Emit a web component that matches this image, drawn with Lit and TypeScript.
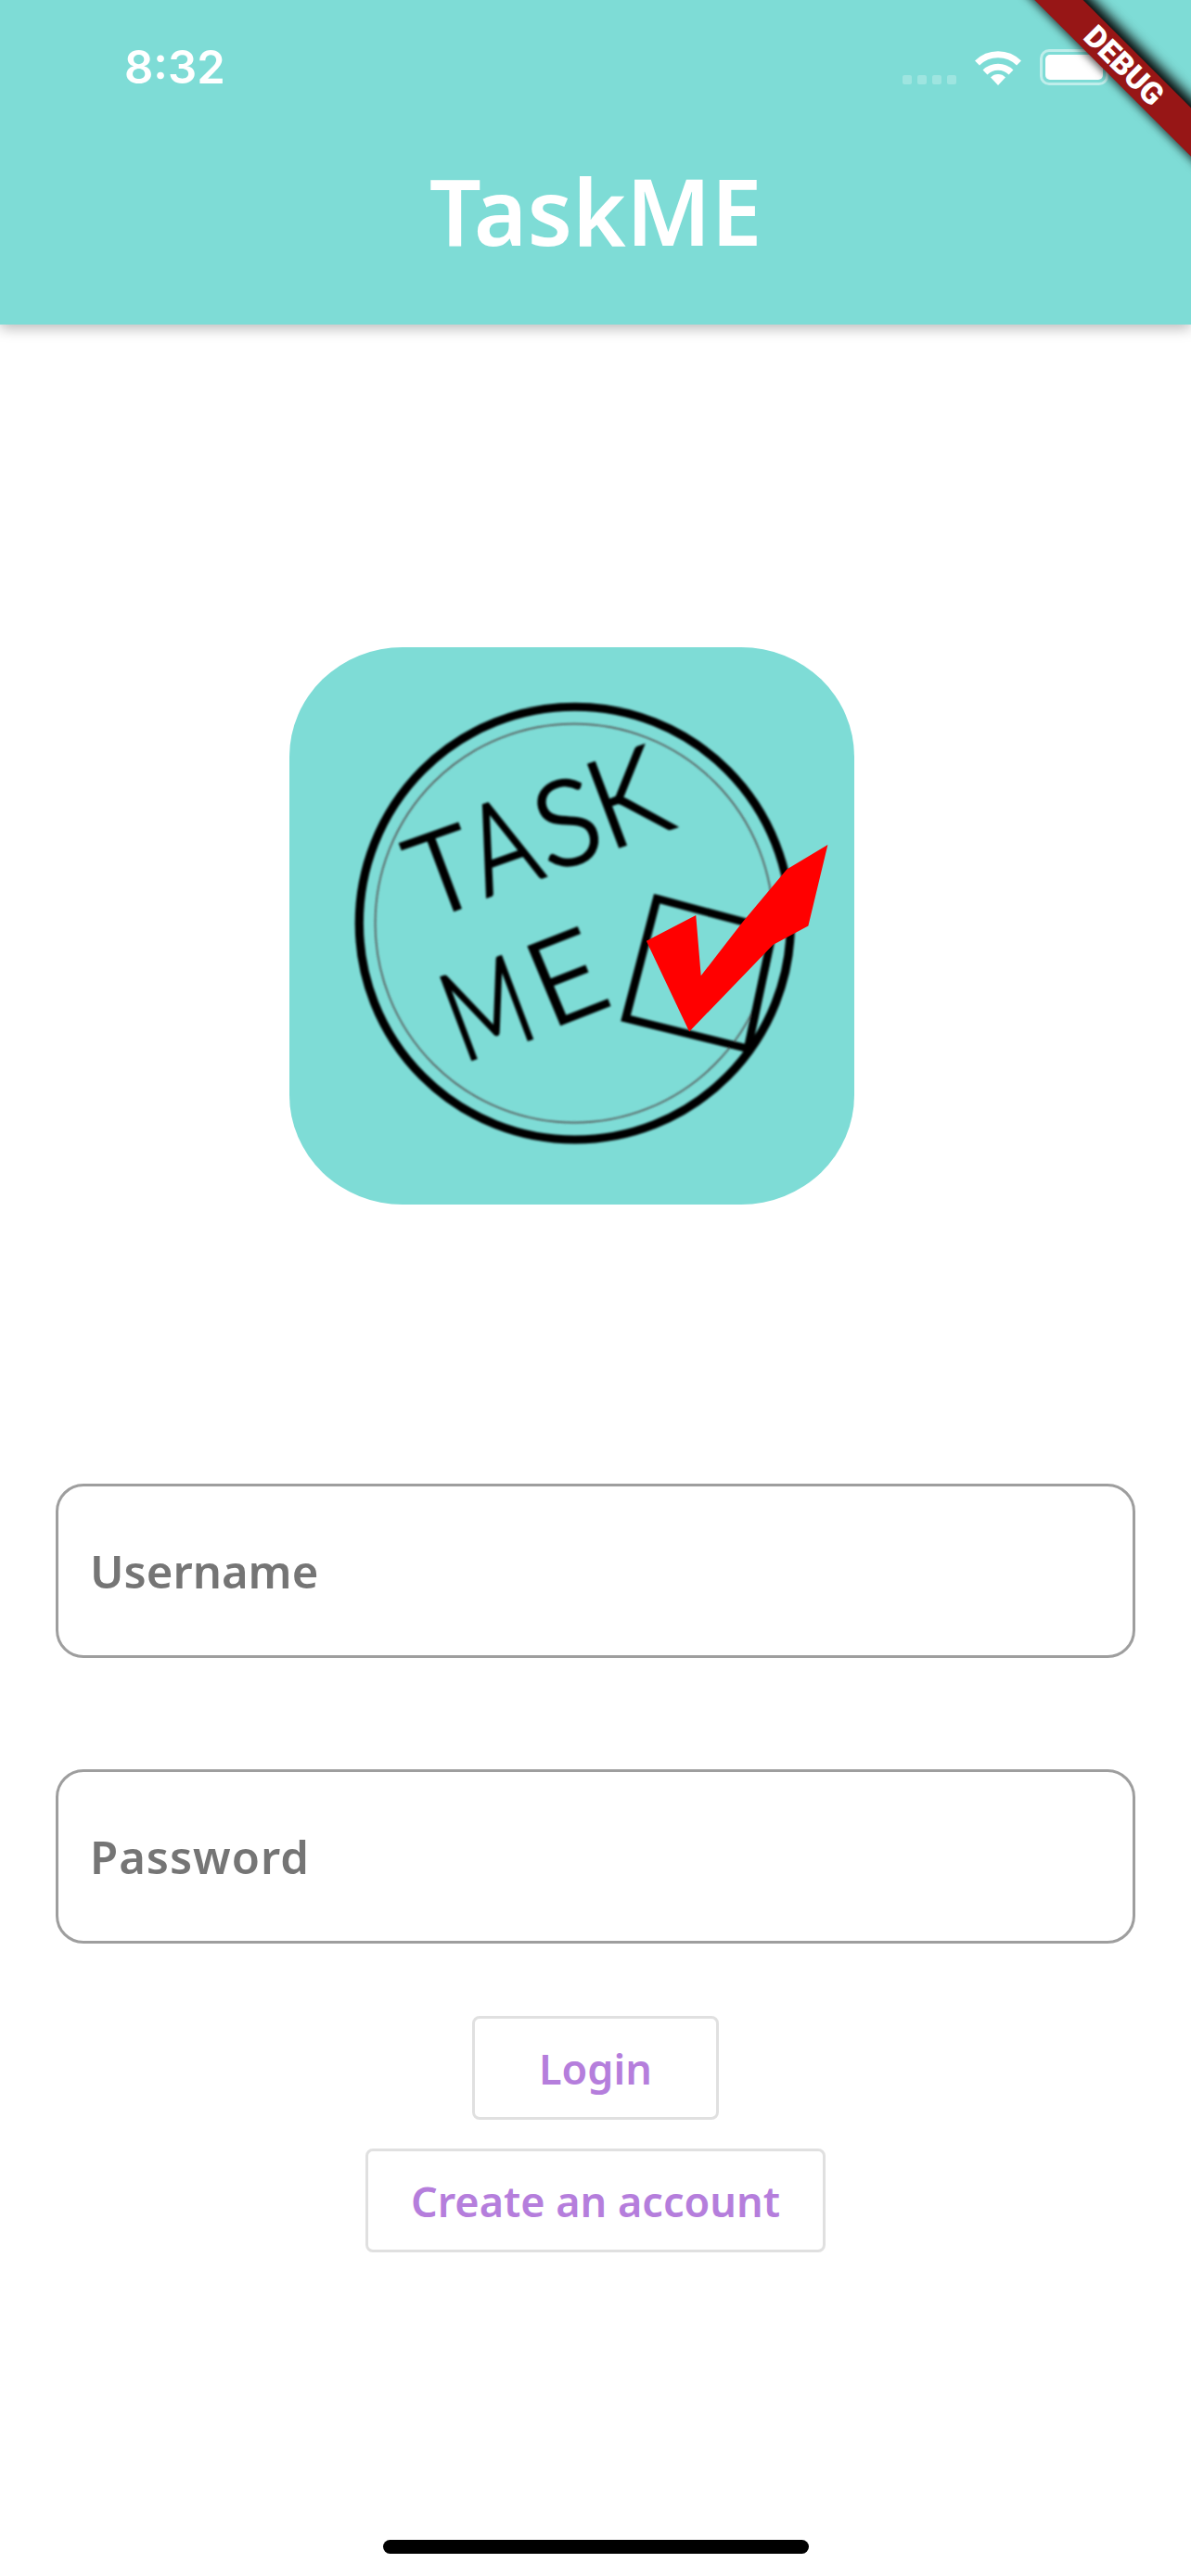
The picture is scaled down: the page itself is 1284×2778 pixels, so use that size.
import { css, html, svg, LitElement } from "lit";
import { customElement } from "lit/decorators.js";

// each letter of the logo sits at its own angle, so they are placed one by one
const LOGO_LETTERS = [
  { ch: "T", x: 480, y: 735, rot: -20, sx: 0.95, size: 298 },
  { ch: "A", x: 632, y: 675, rot: -20, sx: 0.78, size: 325 },
  { ch: "S", x: 790, y: 612, rot: -15, sx: 0.98, size: 310 },
  { ch: "K", x: 955, y: 548, rot: -20, sx: 0.9, size: 325 },
  { ch: "M", x: 595, y: 1105, rot: -20, sx: 0.72, size: 325 },
  { ch: "E", x: 800, y: 1018, rot: -22, sx: 1, size: 310 },
];

@customElement("app-root")
export class AppRoot extends LitElement {
  static styles = css`
    :host {
      display: block;
      width: 1284px;
      height: 2778px;
      position: relative;
      overflow: hidden;
      background: #fff;
      font-family: "Noto Sans", "Open Sans", sans-serif;
    }
    .appbar {
      height: 350px;
      background: #7edcd6;
      box-shadow: 0 4px 14px rgba(0, 0, 0, 0.28);
      display: flex;
      flex-direction: column;
      position: relative;
    }
    .status {
      height: 92px;
      padding: 53px 89px 0 134px;
      box-sizing: border-box;
      display: flex;
      justify-content: space-between;
      align-items: flex-start;
      color: #fff;
    }
    .time {
      font-family: Inter, "Liberation Sans", sans-serif;
      font-weight: 600;
      font-size: 49px;
      line-height: 39px;
    }
    .status-icons {
      display: flex;
      align-items: flex-end;
      height: 39px;
    }
    .signal {
      display: flex;
      gap: 6px;
      margin-right: 20px;
      margin-bottom: 1px;
    }
    .signal span {
      width: 10px;
      height: 10px;
      border-radius: 2px;
      background: rgba(255, 255, 255, 0.25);
    }
    .battery {
      width: 74px;
      height: 39px;
      margin-left: 20px;
      box-sizing: border-box;
      border: 3px solid rgba(255, 255, 255, 0.5);
      border-radius: 10px;
      padding: 3px;
    }
    .battery i {
      display: block;
      height: 100%;
      background: #fff;
      border-radius: 5px;
    }
    .title {
      margin: 67px 0 0;
      text-align: center;
      color: #fff;
      font-size: 98.5px;
      font-weight: 600;
      line-height: 136px;
    }
    .ribbon {
      position: absolute;
      left: 1042px;
      top: 52px;
      width: 340px;
      height: 37px;
      transform: rotate(45deg);
      background: #971616;
      box-shadow: 0 -8px 13px rgba(0, 0, 0, 0.95), 0 3px 9px rgba(0, 0, 0, 0.55);
      color: #fff;
      font-family: Roboto, "Liberation Sans", sans-serif;
      font-weight: 900;
      font-size: 33px;
      line-height: 37px;
      text-align: center;
    }
    .logo {
      display: block;
      width: 609px;
      height: 601px;
      margin: 348px 0 0 312px;
    }
    .logo text {
      font-family: Lato, sans-serif;
      font-weight: 300;
      text-anchor: middle;
      stroke: #000;
      stroke-width: 8px;
    }
    .form {
      display: flex;
      flex-direction: column;
      align-items: center;
      margin-top: 301px;
    }
    .field {
      width: 1164px;
      height: 188px;
      box-sizing: border-box;
      border: 3px solid #9e9e9e;
      border-radius: 30px;
      padding-left: 34px;
      display: flex;
      align-items: center;
      font-size: 49px;
      font-weight: 600;
      color: #757575;
    }
    .field + .field {
      margin-top: 120px;
      letter-spacing: 1px;
    }
    .button {
      box-sizing: border-box;
      height: 112px;
      min-width: 266px;
      border: 3px solid #e0e0e0;
      border-radius: 8px;
      padding: 0 46px;
      display: flex;
      align-items: center;
      justify-content: center;
      font-size: 45px;
      font-weight: 600;
      color: #b57edc;
    }
    .field + .button {
      margin-top: 78px;
    }
    .button + .button {
      margin-top: 31px;
    }
    .home-bar {
      position: absolute;
      left: 413px;
      top: 2739px;
      width: 459px;
      height: 15px;
      border-radius: 8px;
      background: #000;
    }
  `;

  renderLogo() {
    return html`<svg class="logo" viewBox="50 42 1448 1476" preserveAspectRatio="none">
      <defs>
        <filter id="soft"><feGaussianBlur stdDeviation="2" /></filter>
      </defs>
      <rect x="50" y="42" width="1448" height="1476" rx="290" fill="#7edcd6" />
      <g filter="url(#soft)">
        <ellipse cx="782" cy="773" rx="553" ry="573" fill="none" stroke="#000" stroke-width="22" />
        <ellipse cx="780" cy="773" rx="510" ry="528" fill="none" stroke="#555" stroke-width="4" />
        ${LOGO_LETTERS.map(
          (l) => svg`<text
            transform="translate(${l.x} ${l.y}) rotate(${l.rot}) scale(${l.sx} 1)"
            font-size=${l.size}
          >${l.ch}</text>`
        )}
        <polygon points="992,708 1290,790 1225,1105 912,1025" fill="none" stroke="#000" stroke-width="21" />
      </g>
      <polygon
        points="965,820 1092,752 1105,912 1210,772 1325,630 1430,565 1380,780 1290,830 1075,1060"
        fill="#ff0000"
      />
    </svg>`;
  }

  render() {
    return html`
      <div class="appbar">
        <div class="status">
          <span class="time">8:32</span>
          <div class="status-icons">
            <div class="signal"><span></span><span></span><span></span><span></span></div>
            <svg width="50" height="37" viewBox="0 0 50 37" fill="none" stroke="#fff">
              <path d="M2.500 13A32 32 0 0 1 47.500 13" stroke-width="7" />
              <path d="M11 23A20 20 0 0 1 39 23" stroke-width="7" />
              <path d="M25 37L17 28.500A11 11 0 0 1 33 28.500Z" fill="#fff" stroke="none" />
            </svg>
            <div class="battery"><i></i></div>
          </div>
        </div>
        <h1 class="title">TaskME</h1>
      </div>
      <div class="ribbon">DEBUG</div>
      ${this.renderLogo()}
      <div class="form">
        <div class="field">Username</div>
        <div class="field">Password</div>
        <div class="button">Login</div>
        <div class="button">Create an account</div>
      </div>
      <div class="home-bar"></div>
    `;
  }
}
